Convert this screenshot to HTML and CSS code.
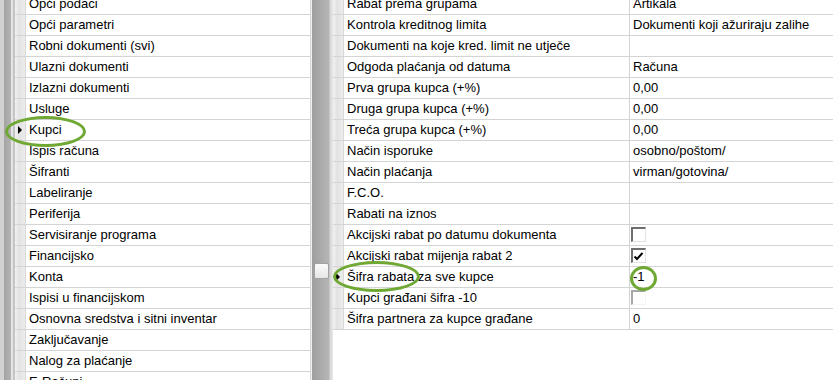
FILE: index.html
```html
<!DOCTYPE html>
<html>
<head>
  <meta charset="utf-8">
  <title>Postavke - Kupci</title>
  <link rel="stylesheet" href="styles.css">
</head>
<body>

  <div class="window">

    <div class="frame"></div>

    <div class="grid grid-left">
      <div class="rows">
        <div class="row"><span class="ind"></span><span class="cell">Opći podaci</span></div>
        <div class="row"><span class="ind"></span><span class="cell">Opći parametri</span></div>
        <div class="row"><span class="ind"></span><span class="cell">Robni dokumenti (svi)</span></div>
        <div class="row"><span class="ind"></span><span class="cell">Ulazni dokumenti</span></div>
        <div class="row"><span class="ind"></span><span class="cell">Izlazni dokumenti</span></div>
        <div class="row"><span class="ind"></span><span class="cell">Usluge</span></div>
        <div class="row current"><span class="ind"></span><span class="cell">Kupci</span></div>
        <div class="row"><span class="ind"></span><span class="cell">Ispis računa</span></div>
        <div class="row"><span class="ind"></span><span class="cell">Šifranti</span></div>
        <div class="row"><span class="ind"></span><span class="cell">Labeliranje</span></div>
        <div class="row"><span class="ind"></span><span class="cell">Periferija</span></div>
        <div class="row"><span class="ind"></span><span class="cell">Servisiranje programa</span></div>
        <div class="row"><span class="ind"></span><span class="cell">Financijsko</span></div>
        <div class="row"><span class="ind"></span><span class="cell">Konta</span></div>
        <div class="row"><span class="ind"></span><span class="cell">Ispisi u financijskom</span></div>
        <div class="row"><span class="ind"></span><span class="cell">Osnovna sredstva i sitni inventar</span></div>
        <div class="row"><span class="ind"></span><span class="cell">Zaključavanje</span></div>
        <div class="row"><span class="ind"></span><span class="cell">Nalog za plaćanje</span></div>
        <div class="row"><span class="ind"></span><span class="cell">E-Računi</span></div>
      </div>
    </div>

    <div class="splitter">
      <div class="thumb"></div>
    </div>

    <div class="grid grid-right">
      <div class="rows">
        <div class="row"><span class="ind"></span><span class="cell name">Rabat prema grupama</span><span class="cell">Artikala</span></div>
        <div class="row"><span class="ind"></span><span class="cell name">Kontrola kreditnog limita</span><span class="cell">Dokumenti koji ažuriraju zalihe</span></div>
        <div class="row"><span class="ind"></span><span class="cell name">Dokumenti na koje kred. limit ne utječe</span><span class="cell"></span></div>
        <div class="row"><span class="ind"></span><span class="cell name">Odgoda plaćanja od datuma</span><span class="cell">Računa</span></div>
        <div class="row"><span class="ind"></span><span class="cell name">Prva grupa kupca (+%)</span><span class="cell">0,00</span></div>
        <div class="row"><span class="ind"></span><span class="cell name">Druga grupa kupca (+%)</span><span class="cell">0,00</span></div>
        <div class="row"><span class="ind"></span><span class="cell name">Treća grupa kupca (+%)</span><span class="cell">0,00</span></div>
        <div class="row"><span class="ind"></span><span class="cell name">Način isporuke</span><span class="cell">osobno/poštom/</span></div>
        <div class="row"><span class="ind"></span><span class="cell name">Način plaćanja</span><span class="cell">virman/gotovina/</span></div>
        <div class="row"><span class="ind"></span><span class="cell name">F.C.O.</span><span class="cell"></span></div>
        <div class="row"><span class="ind"></span><span class="cell name">Rabati na iznos</span><span class="cell"></span></div>
        <div class="row"><span class="ind"></span><span class="cell name">Akcijski rabat po datumu dokumenta</span><span class="cell"><span class="check"></span></span></div>
        <div class="row"><span class="ind"></span><span class="cell name">Akcijski rabat mijenja rabat 2</span><span class="cell"><span class="check checked">
          <svg width="11" height="11" viewBox="0 0 11 11"><path d="M1.5 5.5 L4 8 L9.5 2" fill="none" stroke="#000" stroke-width="2"/></svg>
        </span></span></div>
        <div class="row current"><span class="ind"></span><span class="cell name">Šifra rabata za sve kupce</span><span class="cell">-1</span></div>
        <div class="row"><span class="ind"></span><span class="cell name">Kupci građani šifra -10</span><span class="cell"><span class="check faded"></span></span></div>
        <div class="row"><span class="ind"></span><span class="cell name">Šifra partnera za kupce građane</span><span class="cell">0</span></div>
      </div>
    </div>

    <!-- green annotation rings drawn over the grids -->
    <div class="mark mark-kupci"></div>
    <div class="mark mark-sifra"></div>
    <div class="mark mark-value"></div>

  </div>

</body>
</html>
```

FILE: styles.css
```css
* {
  box-sizing: border-box;
}

body {
  margin: 0;
  background: #fff;
  font-family: "Liberation Sans", Arial, sans-serif;
  font-size: 13px;
  color: #000;
}

.window {
  position: relative;
  display: flex;
  width: 833px;
  height: 380px;
  overflow: hidden;
}

/* window frame on the far left */
.frame {
  flex: 0 0 15px;
  background: linear-gradient(to right,
    #d2d2d2 0, #d2d2d2 4px,
    #a4a4a4 4px, #b4b4b4 11px,
    #e4e4e4 11px, #e4e4e4 13px,
    #c4c4c4 13px, #c4c4c4 15px);
}

.grid {
  overflow: hidden;
  background: #fff;
}

.grid-left {
  flex: 0 0 296px;
  border-right: 1px solid #d6d6d6;
}

.grid-right {
  flex: 1;
}

/* grid is scrolled a few pixels down */
.rows {
  margin-top: -6px;
}

.row {
  display: grid;
  height: 21px;
  border-bottom: 1px solid #d4d4d4;
  line-height: 20px;
  white-space: nowrap;
}

.grid-left .row {
  grid-template-columns: 11px 1fr;
}

.grid-right .row {
  grid-template-columns: 11px 286px 1fr;
}

.ind {
  position: relative;
  background: linear-gradient(to right, #f2f2f2, #e2e2e2 40%, #ececec);
  border-right: 1px solid #d8d8d8;
}

.row.current .ind::after {
  content: "";
  position: absolute;
  left: 3px;
  top: 6px;
  border-left: 4px solid #000;
  border-top: 4px solid transparent;
  border-bottom: 4px solid transparent;
}

.cell {
  padding-left: 3px;
  overflow: hidden;
}

.cell.name {
  border-right: 1px solid #d4d4d4;
}

.check {
  display: block;
  width: 15px;
  height: 15px;
  margin: 2px 0 0 -2px;
  background: #fff;
  border-top: 2px solid #6e6e6e;
  border-left: 2px solid #6e6e6e;
  border-right: 1px solid #e2e2e2;
  border-bottom: 1px solid #e2e2e2;
}

.check svg {
  display: block;
  margin: 1px 0 0 0;
}

.check.faded {
  border-top-color: #a8a8a8;
  border-left-color: #a8a8a8;
  border-right-color: #f4f4f4;
  border-bottom-color: #f4f4f4;
}

.splitter {
  flex: 0 0 22px;
  display: flex;
  flex-direction: column;
  padding: 263px 0 0 3px;
  background: linear-gradient(to right,
    #f0f0f0 0, #f0f0f0 1px,
    #9e9e9e 1px, #a8a8a8 8px, #b6b6b6 18px,
    #d6d6d6 19px, #e8e8e8 22px);
}

.thumb {
  width: 15px;
  height: 16px;
  background: linear-gradient(#fbfbfb, #e6e6e6);
  border: 1px solid #a2a2a2;
  border-radius: 2px;
}

/* green annotation rings */
.mark {
  position: absolute;
  border: 3px solid #6fa833;
  border-radius: 50%;
}

.mark-kupci {
  left: 5px;
  top: 116px;
  width: 81px;
  height: 31px;
}

.mark-sifra {
  left: 333px;
  top: 261px;
  width: 87px;
  height: 31px;
}

.mark-value {
  left: 630px;
  top: 266px;
  width: 27px;
  height: 25px;
}
```
